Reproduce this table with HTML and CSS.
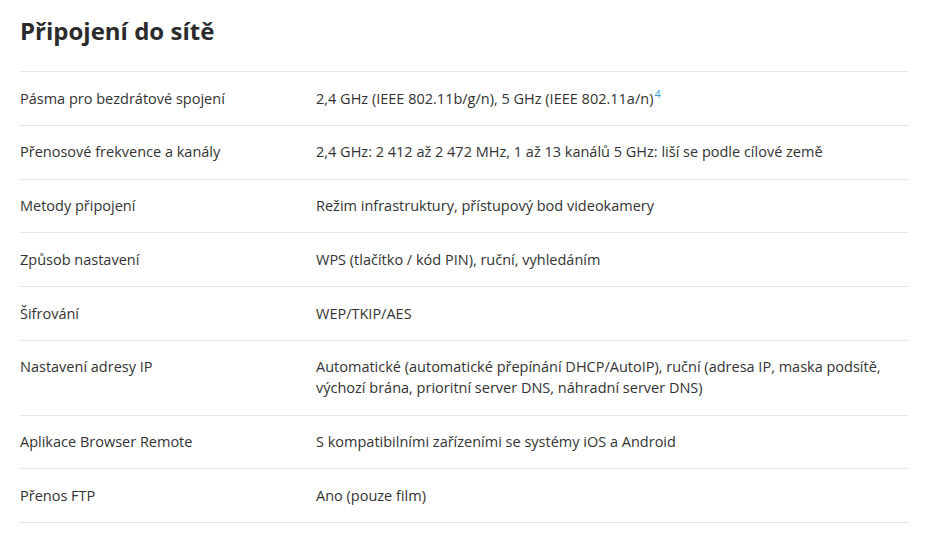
FILE: index.html
```html
<!DOCTYPE html>
<html lang="cs">
<head>
<meta charset="utf-8">
<title>Připojení do sítě</title>
<link rel="stylesheet" href="styles.css">
</head>
<body>
<section class="specs">
  <h2 class="specs-title">Připojení do sítě</h2>
  <div class="spec-table">
    <div class="spec-row">
      <div class="spec-name">Pásma pro bezdrátové spojení</div>
      <div class="spec-value">2,4 GHz (IEEE 802.11b/g/n), 5 GHz (IEEE 802.11a/n)<sup class="note">4</sup></div>
    </div>
    <div class="spec-row">
      <div class="spec-name">Přenosové frekvence a kanály</div>
      <div class="spec-value">2,4 GHz: 2 412 až 2 472 MHz, 1 až 13 kanálů 5 GHz: liší se podle cílové země</div>
    </div>
    <div class="spec-row">
      <div class="spec-name">Metody připojení</div>
      <div class="spec-value">Režim infrastruktury, přístupový bod videokamery</div>
    </div>
    <div class="spec-row">
      <div class="spec-name">Způsob nastavení</div>
      <div class="spec-value">WPS (tlačítko / kód PIN), ruční, vyhledáním</div>
    </div>
    <div class="spec-row">
      <div class="spec-name">Šifrování</div>
      <div class="spec-value">WEP/TKIP/AES</div>
    </div>
    <div class="spec-row">
      <div class="spec-name">Nastavení adresy IP</div>
      <div class="spec-value">Automatické (automatické přepínání DHCP/AutoIP), ruční (adresa IP, maska podsítě, výchozí brána, prioritní server DNS, náhradní server DNS)</div>
    </div>
    <div class="spec-row">
      <div class="spec-name">Aplikace Browser Remote</div>
      <div class="spec-value">S kompatibilními zařízeními se systémy iOS a Android</div>
    </div>
    <div class="spec-row">
      <div class="spec-name">Přenos FTP</div>
      <div class="spec-value">Ano (pouze film)</div>
    </div>
  </div>
</section>
</body>
</html>
```
FILE: styles.css
```css
html, body {
  margin: 0;
  padding: 0;
  background: #ffffff;
}

body {
  font-family: "Open Sans", "Liberation Sans", sans-serif;
  color: #333333;
}

.specs {
  padding: 14px 30px 0 20px;
}

.specs-title {
  margin: 0 0 23px 0;
  font-size: 24px;
  line-height: 34px;
  font-weight: 700;
  color: #2b2b2b;
}

.spec-table {
  border-top: 1px solid #e6e6e6;
}

.spec-row {
  display: grid;
  grid-template-columns: 296px 1fr;
  padding: 15.5px 0 16.25px 0;
  border-bottom: 1px solid #e6e6e6;
  font-size: 14.5px;
  line-height: 21px;
}

.spec-name,
.spec-value {
  color: #333333;
}

.spec-value {
  padding-right: 20px;
}

.note {
  margin-left: 1px;
  color: #3d9ad6;
  font-size: 11px;
  line-height: 0;
  vertical-align: 6px;
}
```
